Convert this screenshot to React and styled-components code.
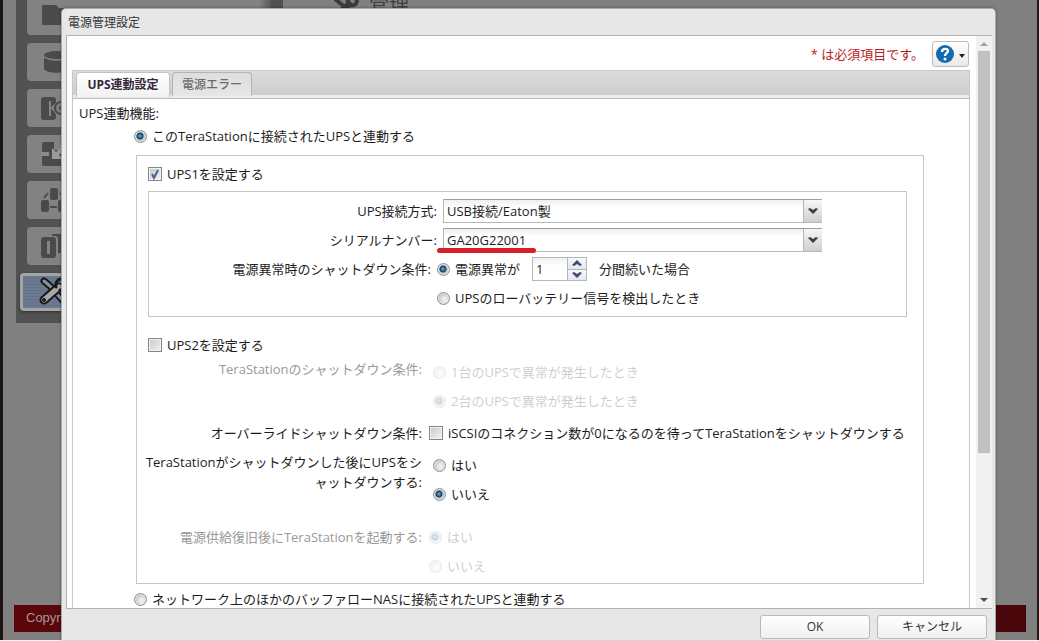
import React from "react";
import styled, { createGlobalStyle, css } from "styled-components";

const GlobalStyle = createGlobalStyle`
  *, *::before, *::after { box-sizing: border-box; }
  body {
    margin: 0;
    background: #f4f2f2;
    color: #1c1c1c;
    font-family: "Open Sans", "Noto Sans CJK JP", sans-serif;
    font-size: 13px;
    line-height: 20px;
  }
  button, input, select { font: inherit; color: inherit; margin: 0; }
`;

/* ---------- page behind the dialog ---------- */

const Page = styled.div`
  position: relative;
  height: 100vh;
  padding-bottom: 1px;
  overflow: hidden;
`;

const Backdrop = styled.div`
  display: flex;
  flex-direction: column;
  height: 100%;
  padding: 0 11px 8px;
  background: #808080;
  border-left: 3px solid #191614;
  border-right: 2px solid #1b1b1a;
`;

const Main = styled.div`
  display: flex;
  flex: 1;
  align-items: flex-start;
`;

const Sidebar = styled.nav`
  display: flex;
  flex-direction: column;
  gap: 8px;
  width: 267px;
  margin-left: 2px;
  padding: 0 12px 12px 11px;
  background: #525252;
`;

const NavButton = styled.button`
  display: block;
  height: 38px;
  padding: 0;
  border: 0;
  border-radius: 4px;
  background: linear-gradient(90deg, #828282 0, #828282 calc(100% - 12px), #585858);
  text-align: left;
  overflow: hidden;

  ${(p) => p.$cut && css`
    height: 35px;
    border-radius: 0 0 4px 4px;
  `}

  ${(p) => p.$active && css`
    margin-left: -7px;
    border: 3px solid #a3a5a6;
    background: repeating-linear-gradient(#6c7b90 0 2px, #62728a 2px 3px);
    box-shadow: 0 1px 3px #2f2f2f;
  `}

  svg { display: block; }
`;

const PageTitle = styled.h1`
  display: flex;
  align-items: center;
  gap: 8px;
  height: 8px;
  margin: 0 0 0 50px;
  color: #3b3f41;
  font-size: 20px;
  font-weight: 400;
  line-height: 8px;
`;

const PageFooter = styled.footer`
  height: 27px;
  padding-left: 12px;
  background: linear-gradient(90deg, #5b060b, #48060a);
  color: #a39a9a;
  font-family: "Liberation Sans", sans-serif;
  line-height: 26px;
`;

/* ---------- dialog ---------- */

const Dialog = styled.section`
  position: absolute;
  inset: 8px 43px 1px 61px;
  display: flex;
  flex-direction: column;
  padding: 0 3px 0 4px;
  background: #e7e7e7;
  border: 1px solid #a9a9a9;
  border-bottom: 0;
  border-radius: 5px 5px 0 0;
  box-shadow: 0 0 3px rgba(0, 0, 0, 0.35);
`;

const DialogTitle = styled.h2`
  margin: 0;
  padding: 4px 2px 2px;
  color: #333;
  font-size: 12px;
  font-weight: 400;
`;

const DialogBody = styled.div`
  display: flex;
  flex: 1;
  min-height: 0;
  background: #fff;
  border: 1px solid #b1b1b1;
  border-right: 0;
`;

const Viewport = styled.div`
  flex: 1;
  min-width: 0;
  padding: 5px 6px 0 5px;
  overflow: hidden;
`;

const Toolbar = styled.div`
  display: flex;
  justify-content: flex-end;
  align-items: center;
  gap: 8px;
  height: 29px;
  padding: 0 1px 3px 0;
`;

const Required = styled.span`
  color: #b81c22;
`;

const HelpButton = styled.button`
  display: flex;
  align-items: center;
  justify-content: center;
  gap: 5px;
  width: 37px;
  height: 26px;
  padding: 0;
  border: 1px solid #bcbcbc;
  border-radius: 3px;
  background: linear-gradient(#fff, #e9e9e9);

  svg + svg { margin-top: 4px; }
`;

const TabBar = styled.div`
  display: flex;
  gap: 2px;
  height: 29px;
  padding: 1px 3px 0;
  border: 1px solid #c8c8c8;
  border-bottom-color: #bdbdbd;
  background: linear-gradient(#dddcdd, #cdcdcd 24px, #ececec 24px);
`;

const Tab = styled.button`
  width: ${(p) => (p.$active ? 94 : 80)}px;
  height: ${(p) => (p.$active ? 25 : 24)}px;
  padding: 0;
  border: 1px solid ${(p) => (p.$active ? "#c2c2c2" : "#b4b4b4")};
  border-bottom: 0;
  border-radius: 4px 4px 0 0;
  background: ${(p) => (p.$active ? "linear-gradient(#fff, #f3f2f3)" : "linear-gradient(#dedede, #e6e6e6)")};
  color: ${(p) => (p.$active ? "#33283a" : "#6a6a6a")};
  font-size: 12px;
  font-weight: ${(p) => (p.$active ? 700 : 500)};
  line-height: 20px;
`;

const Panel = styled.form`
  padding: 4px 45px 24px 6px;
  border: 1px solid #c8c8c8;
  border-top: 0;
`;

const Scrollbar = styled.div`
  display: flex;
  flex-direction: column;
  align-items: center;
  width: 16px;
  padding: 6px 0;
  background: #f1f1f1;
`;

const ScrollTrack = styled.div`
  flex: 1;
  width: 12px;
  margin: 5px 0 4px;
`;

const ScrollThumb = styled.div`
  height: 74%;
  background: #c1c1c1;
`;

const DialogFooter = styled.footer`
  display: flex;
  justify-content: flex-end;
  gap: 7px;
  padding: 6px 5px 1px;
`;

const ActionButton = styled.button`
  width: 110px;
  height: 24px;
  padding: 0;
  border: 1px solid #b9b9b9;
  border-radius: 3px;
  background: linear-gradient(#fff, #f0f0f0);
  color: #333;
  font-size: 12px;
`;

/* ---------- form parts ---------- */

const RadioInput = styled.input`
  appearance: none;
  flex: none;
  width: 13px;
  height: 13px;
  border: 1px solid #8d9296;
  border-radius: 50%;
  background: radial-gradient(circle at 60% 60%, #ececec 20%, #bdbdbd 75%);
  box-shadow: inset 0 0 0 1px #e4e4e4;

  &:checked {
    background: radial-gradient(circle at 45% 45%, #7fb0cf 0, #2d6288 2px, #173f60 3px, #b9c9d4 4px);
  }
`;

const CheckInput = styled.input`
  appearance: none;
  flex: none;
  width: 14px;
  height: 14px;
  border: 1px solid #858585;
  background: linear-gradient(135deg, #c6c6c6, #f4f4f4);
  box-shadow: inset 0 0 0 1px #f3f3f3;
`;

const CheckBoxWrap = styled.span`
  display: grid;
  flex: none;

  > * { grid-area: 1 / 1; pointer-events: none; }
  > input { pointer-events: auto; }
`;

const OptionLabel = styled.label`
  display: flex;
  align-items: center;
  gap: 5px;
  height: 20px;
  white-space: nowrap;
  opacity: ${(p) => (p.$disabled ? 0.22 : 1)};
`;

const ModeOption = styled.div`
  margin: ${(p) => (p.$last ? "5px 0 0 55px" : "3px 0 9px 55px")};
`;

const Group = styled.fieldset`
  min-width: 0;
  margin: 0 0 0 57px;
  padding: 8px 16px 7px 8px;
  border: 1px solid #c6c6c6;

  > label { margin-left: 3px; }
`;

const SubGroup = styled.fieldset`
  display: flex;
  flex-direction: column;
  gap: 5px;
  min-width: 0;
  margin: 7px 0 18px 3px;
  padding: 7px 0 6px;
  border: 1px solid #c6c6c6;
`;

const Field = styled.div`
  display: flex;
  align-items: center;
  gap: 6px;
  min-height: 24px;
`;

const FieldLabel = styled.label`
  flex: none;
  width: ${(p) => (p.$narrow ? 282 : 288)}px;
  text-align: right;
`;

const Choice = styled.div`
  display: flex;
  align-items: flex-start;
  gap: ${(p) => (p.$tight ? 7 : 11)}px;
  margin-top: ${(p) => p.$space}px;
`;

const ChoiceLabel = styled.span`
  flex: none;
  width: 277px;
  text-align: right;
  line-break: anywhere;
  color: ${(p) => (p.$disabled ? "#999" : "inherit")};
`;

const Options = styled.div`
  display: flex;
  flex-direction: column;
  gap: 9px;
  padding-top: ${(p) => (p.$lower ? 3 : 0)}px;
`;

const SelectWrap = styled.div`
  position: relative;
  display: flex;
  width: 379px;
`;

const SelectInput = styled.select`
  appearance: none;
  flex: 1;
  height: 24px;
  padding: 0 24px 0 3px;
  border: 1px solid #b2b6bd;
  border-top-color: #9a9fa6;
  border-radius: 0;
  background: linear-gradient(#eef0f1, #fff 8px);
  outline: 0;
`;

const SelectArrow = styled.span`
  position: absolute;
  top: 1px;
  right: 0;
  display: flex;
  align-items: center;
  justify-content: center;
  width: 19px;
  height: 22px;
  border-left: 1px solid #b2b6bd;
  background: linear-gradient(#f7f7f7, #cfcfd1);
  pointer-events: none;
`;

const Underline = styled.span`
  position: absolute;
  left: -6px;
  bottom: -1px;
  width: 99px;
  height: 5px;
  border-radius: 3px;
  background: #d91f2c;
`;

const Spinner = styled.div`
  display: flex;
  width: 55px;
  height: 24px;
  margin: 0 6px;
  border: 1px solid #b2b6bd;
`;

const SpinnerInput = styled.input`
  flex: 1;
  min-width: 0;
  padding: 0 3px;
  border: 0;
  background: linear-gradient(#eef0f1, #fff 8px);
  outline: 0;
`;

const SpinnerButtons = styled.div`
  display: flex;
  flex-direction: column;
  width: 19px;
  border-left: 1px solid #b2b6bd;
`;

const SpinnerButton = styled.button`
  display: flex;
  flex: 1;
  align-items: center;
  justify-content: center;
  padding: 0;
  border: 0;
  background: linear-gradient(#f8f8fa, #e6e8ed);

  & + & { border-top: 1px solid #b2b6bd; }
`;

/* ---------- icons ---------- */

const NavIcon = ({ children, width = 60, height = 38, viewBox = "0 0 60 38" }) => (
  <svg width={width} height={height} viewBox={viewBox} fill="#4a4a4a" aria-hidden="true">
    {children}
  </svg>
);

const FolderIcon = () => (
  <NavIcon height={35} viewBox="0 0 60 35">
    <path d="M15 5h14l3 3h15v17H15z" />
  </NavIcon>
);

const DiskIcon = () => (
  <NavIcon>
    <ellipse cx="30" cy="12" rx="13" ry="4" />
    <path d="M17 14c3 5 23 5 26 0v12c-3 5-23 5-26 0z" />
  </NavIcon>
);

const BackupIcon = () => (
  <NavIcon>
    <rect x="14" y="8" width="15" height="23" rx="3" />
    <path d="M23 12v15M32 12l-7 7 7 8" fill="none" stroke="#858585" strokeWidth="2" />
    <circle cx="34" cy="19" r="6" fill="none" stroke="#4a4a4a" strokeWidth="2" />
    <circle cx="34" cy="19" r="2" />
  </NavIcon>
);

const TransferIcon = () => (
  <NavIcon>
    <path d="M17 7h10v8h8v16H17a2 2 0 0 1-2-2V9a2 2 0 0 1 2-2z" />
    <path d="M14 17h8v4h-8z" fill="#8b8b8b" />
    <path d="M25 13v11h11z" fill="#9a9a9a" />
    <path d="M28 21l9-9" fill="none" stroke="#9a9a9a" strokeWidth="4" />
  </NavIcon>
);

const ClusterIcon = () => (
  <NavIcon>
    <rect x="23" y="7" width="8" height="12" rx="2" />
    <rect x="14" y="19" width="8" height="12" rx="2" />
    <rect x="31" y="19" width="8" height="12" rx="2" />
    <path d="M17 17l4-5M37 17l-4-5M23 26h7" fill="none" stroke="#4a4a4a" strokeWidth="2" />
  </NavIcon>
);

const CopyIcon = () => (
  <NavIcon>
    <path d="M25 7h16v19h-10V12a3 3 0 0 0-3-3h-3z" />
    <rect x="14" y="10" width="15" height="21" rx="3" />
    <rect x="20" y="14" width="3" height="13" fill="#858585" />
  </NavIcon>
);

const ToolsIcon = () => (
  <NavIcon height={32} viewBox="0 0 60 32">
    <g fill="none" strokeLinecap="round" strokeLinejoin="round">
      <path d="M21 5l6 5 14 16" stroke="#17191b" strokeWidth="7" />
      <path d="M21 5l6 5 14 16" stroke="#8a9098" strokeWidth="3" />
      <path d="M21 24L36 11" stroke="#17191b" strokeWidth="9" />
      <path d="M21 24L36 11" stroke="#a8a8a8" strokeWidth="5" />
      <path d="M33 11c-1-4 1-7 4-8M37 14c4 1 7 0 8-3" stroke="#17191b" strokeWidth="3" />
      <circle cx="21" cy="24" r="1" stroke="#17191b" strokeWidth="2" />
    </g>
  </NavIcon>
);

const TitleIcon = () => (
  <svg width="28" height="26" viewBox="0 0 28 26" fill="none" stroke="#3b3b3b" strokeLinecap="round" aria-hidden="true">
    <path d="M3 9l18 14" strokeWidth="4" />
    <path d="M5 23L16 13" strokeWidth="6" />
    <path d="M15 12c-1-4 2-8 6-8M17 14c4 1 7-1 7-5" strokeWidth="4" />
  </svg>
);

const HelpIcon = () => (
  <svg width="18" height="18" viewBox="0 0 18 18" aria-hidden="true">
    <circle cx="9" cy="9" r="9" fill="#126bb0" />
    <path d="M6 7c0-4 6-4 6-1 0 2-3 2-3 5" fill="none" stroke="#fff" strokeWidth="2.4" />
    <circle cx="9" cy="14" r="1.5" fill="#fff" />
  </svg>
);

const Triangle = ({ up, color, width = 8, height = 4 }) => (
  <svg width={width} height={height} viewBox="0 0 8 4" preserveAspectRatio="none" aria-hidden="true">
    <path d={up ? "M0 4L4 0l4 4z" : "M0 0l4 4 4-4z"} fill={color} />
  </svg>
);

const Chevron = ({ up, color = "#3f3f3f" }) => (
  <svg width="10" height="6" viewBox="0 0 10 6" aria-hidden="true">
    <path d={up ? "M0 5L5 0l5 5-2 1-3-2-3 2z" : "M0 1l2-1 3 2 3-2 2 1-5 5z"} fill={color} />
  </svg>
);

/* ---------- controls ---------- */

const Radio = ({ name, children, checked, disabled }) => (
  <OptionLabel $disabled={disabled}>
    <RadioInput type="radio" name={name} defaultChecked={checked} disabled={disabled} />
    {children}
  </OptionLabel>
);

const Check = ({ children, checked }) => {
  const [on, setOn] = React.useState(Boolean(checked));
  return (
    <OptionLabel>
      <CheckBoxWrap>
        <CheckInput type="checkbox" checked={on} onChange={() => setOn(!on)} />
        {on && (
          <svg width="14" height="14" viewBox="0 0 14 14" aria-hidden="true">
            <path d="M4 7l2 4 4-8" fill="none" stroke="#4560a0" strokeWidth="2" />
          </svg>
        )}
      </CheckBoxWrap>
      {children}
    </OptionLabel>
  );
};

const SelectField = ({ id, label, value, underlined }) => (
  <Field>
    <FieldLabel htmlFor={id}>{label}</FieldLabel>
    <SelectWrap>
      <SelectInput id={id} defaultValue={value}>
        <option>{value}</option>
      </SelectInput>
      <SelectArrow><Chevron /></SelectArrow>
      {underlined && <Underline />}
    </SelectWrap>
  </Field>
);

const ChoiceRow = ({ label, disabled, tight, lower, space, children }) => (
  <Choice role="group" aria-label={label} $tight={tight} $space={space}>
    <ChoiceLabel $disabled={disabled}>{label}</ChoiceLabel>
    <Options $lower={lower}>{children}</Options>
  </Choice>
);

const navItems = [FolderIcon, DiskIcon, BackupIcon, TransferIcon, ClusterIcon, CopyIcon, ToolsIcon];

export default function App() {
  return (
    <>
      <GlobalStyle />
      <Page>
        <Backdrop>
          <Main>
            <Sidebar>
              {navItems.map((Icon, i) => (
                <NavButton key={i} type="button" $cut={i === 0} $active={i === navItems.length - 1}>
                  <Icon />
                </NavButton>
              ))}
            </Sidebar>
            <PageTitle><TitleIcon />管理</PageTitle>
          </Main>
          <PageFooter>Copyright</PageFooter>
        </Backdrop>

        <Dialog role="dialog" aria-labelledby="dialog-title">
          <DialogTitle id="dialog-title">電源管理設定</DialogTitle>
          <DialogBody>
            <Viewport>
              <Toolbar>
                <Required>* は必須項目です。</Required>
                <HelpButton type="button" aria-label="?">
                  <HelpIcon />
                  <Triangle color="#222" width={6} height={4} />
                </HelpButton>
              </Toolbar>
              <TabBar role="tablist">
                <Tab type="button" role="tab" aria-selected="true" $active>UPS連動設定</Tab>
                <Tab type="button" role="tab" aria-selected="false">電源エラー</Tab>
              </TabBar>
              <Panel>
                <div>UPS連動機能:</div>
                <ModeOption>
                  <Radio name="mode" checked>このTeraStationに接続されたUPSと連動する</Radio>
                </ModeOption>

                <Group>
                  <Check checked>UPS1を設定する</Check>
                  <SubGroup>
                    <SelectField id="method" label="UPS接続方式:" value="USB接続/Eaton製" />
                    <SelectField id="serial" label="シリアルナンバー:" value="GA20G22001" underlined />
                    <Field>
                      <FieldLabel as="span" $narrow>電源異常時のシャットダウン条件:</FieldLabel>
                      <Radio name="condition" checked>電源異常が</Radio>
                      <Spinner>
                        <SpinnerInput type="text" aria-label="分間続いた場合" defaultValue="1" />
                        <SpinnerButtons>
                          <SpinnerButton type="button"><Chevron up color="#3c4a75" /></SpinnerButton>
                          <SpinnerButton type="button"><Chevron color="#3c4a75" /></SpinnerButton>
                        </SpinnerButtons>
                      </Spinner>
                      <span>分間続いた場合</span>
                    </Field>
                    <Field>
                      <FieldLabel as="span" $narrow />
                      <Radio name="condition">UPSのローバッテリー信号を検出したとき</Radio>
                    </Field>
                  </SubGroup>

                  <Check>UPS2を設定する</Check>
                  <ChoiceRow label="TeraStationのシャットダウン条件:" disabled lower space={4}>
                    <Radio name="units" disabled>1台のUPSで異常が発生したとき</Radio>
                    <Radio name="units" disabled checked>2台のUPSで異常が発生したとき</Radio>
                  </ChoiceRow>
                  <ChoiceRow label="オーバーライドシャットダウン条件:" tight space={12}>
                    <Check>iSCSIのコネクション数が0になるのを待ってTeraStationをシャットダウンする</Check>
                  </ChoiceRow>
                  <ChoiceRow label="TeraStationがシャットダウンした後にUPSをシャットダウンする:" lower space={9}>
                    <Radio name="after">はい</Radio>
                    <Radio name="after" checked>いいえ</Radio>
                  </ChoiceRow>
                  <ChoiceRow label="電源供給復旧後にTeraStationを起動する:" disabled tight space={23}>
                    <Radio name="restore" disabled checked>はい</Radio>
                    <Radio name="restore" disabled>いいえ</Radio>
                  </ChoiceRow>
                </Group>

                <ModeOption $last>
                  <Radio name="mode">ネットワーク上のほかのバッファローNASに接続されたUPSと連動する</Radio>
                </ModeOption>
              </Panel>
            </Viewport>
            <Scrollbar aria-hidden="true">
              <Triangle up color="#a3a3a3" />
              <ScrollTrack><ScrollThumb /></ScrollTrack>
              <Triangle color="#505050" />
            </Scrollbar>
          </DialogBody>
          <DialogFooter>
            <ActionButton type="button">OK</ActionButton>
            <ActionButton type="button">キャンセル</ActionButton>
          </DialogFooter>
        </Dialog>
      </Page>
    </>
  );
}
